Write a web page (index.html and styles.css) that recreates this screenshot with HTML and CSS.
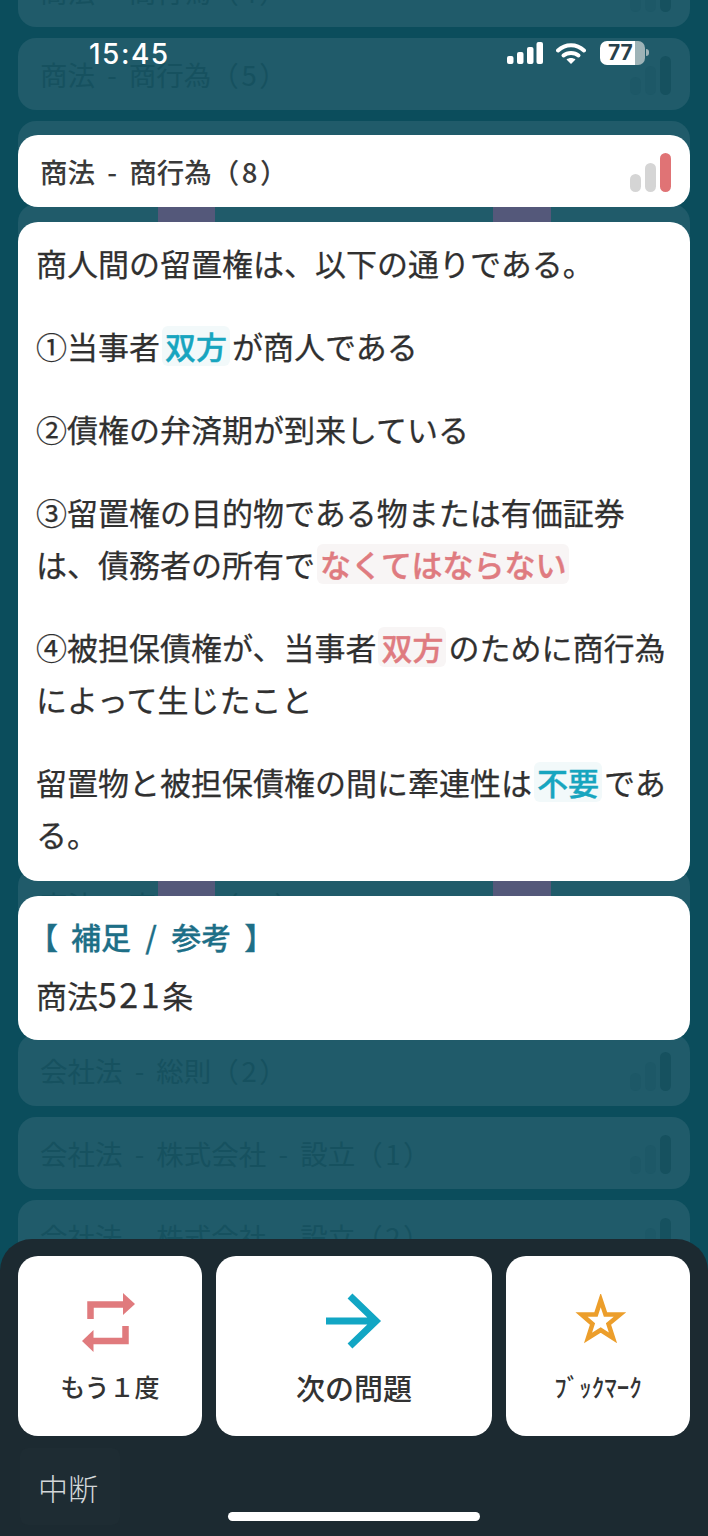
FILE: index.html
```html
<!DOCTYPE html>
<html lang="ja">
<head>
<meta charset="utf-8">
<title>商法 - 商行為（8）</title>
<link rel="stylesheet" href="styles.css">
</head>
<body>
<div class="screen">
  <div class="list">
    <div class="row"><span>商法 - 商行為（<span class="num">4</span>）</span><i class="bars"><b class="b1"></b><b class="b2"></b><b class="b3"></b></i></div>
    <div class="row"><span>商法 - 商行為（<span class="num">5</span>）</span><i class="bars"><b class="b1"></b><b class="b2"></b><b class="b3"></b></i></div>
    <div class="row"><span>商法 - 商行為（<span class="num">6</span>）</span><i class="bars"><b class="b1"></b><b class="b2"></b><b class="b3"></b></i></div>
    <div class="row"><span>商法 - 商行為（<span class="num">7</span>）</span><i class="bars"><b class="b1"></b><b class="b2"></b><b class="b3"></b></i></div>
    <div class="row"><span>商法 - 商行為（<span class="num">8</span>）</span></div>
    <div class="row"><span>商法 - 商行為（<span class="num">9</span>）</span></div>
    <div class="row"><span>商法 - 商行為（<span class="num">10</span>）</span></div>
    <div class="row"><span>商法 - 商行為（<span class="num">11</span>）</span></div>
    <div class="row"><span>商法 - 商行為（<span class="num">12</span>）</span></div>
    <div class="row"><span>商法 - 商行為（<span class="num">13</span>）</span></div>
    <div class="row"><span>商法 - 商行為（<span class="num">14</span>）</span></div>
    <div class="row"><span>商法 - 商行為（<span class="num">15</span>）</span></div>
    <div class="row"><span>会社法 - 総則（<span class="num">1</span>）</span></div>
    <div class="row"><span>会社法 - 総則（<span class="num">2</span>）</span><i class="bars"><b class="b1"></b><b class="b2"></b><b class="b3"></b></i></div>
    <div class="row"><span>会社法 - 株式会社 - 設立（<span class="num">1</span>）</span><i class="bars"><b class="b1"></b><b class="b2"></b><b class="b3"></b></i></div>
    <div class="row"><span>会社法 - 株式会社 - 設立（<span class="num">2</span>）</span><i class="bars"><b class="b1"></b><b class="b2"></b><b class="b3"></b></i></div>
  </div>

  <div class="strip strip-left"></div>
  <div class="strip strip-right"></div>

  <div class="modal">
    <div class="card title-card">
      <span>商法 - 商行為（<span class="num">8</span>）</span>
      <i class="bars bars-live"><b class="b1"></b><b class="b2"></b><b class="b3"></b></i>
    </div>
    <div class="card answer">
      <p>商人間の留置権は、以下の通りである。</p>
      <p>①当事者<em class="mark teal">双方</em>が商人である</p>
      <p>②債権の弁済期が到来している</p>
      <p>③留置権の目的物である物または有価証券は、債務者の所有で<em class="mark red">なくてはならない</em></p>
      <p>④被担保債権が、当事者<em class="mark red">双方</em>のために商行為によって生じたこと</p>
      <p>留置物と被担保債権の間に牽連性は<em class="mark teal">不要</em>である。</p>
    </div>
    <div class="card note">
      <h2 class="note-head"><span class="br-l">【</span>補足 / 参考<span class="br-r">】</span></h2>
      <p class="note-body">商法<span class="digits">521</span>条</p>
    </div>
  </div>

  <div class="status">
    <span class="time">15:45</span>
    <svg class="signal" viewBox="0 0 36 22" width="36" height="22" aria-hidden="true">
      <rect x="0" y="14" width="6.500" height="8" rx="2" fill="#fff"/>
      <rect x="10" y="10" width="6.500" height="12" rx="2" fill="#fff"/>
      <rect x="20" y="5" width="6.500" height="17" rx="2" fill="#fff"/>
      <rect x="29.500" y="0" width="6.500" height="22" rx="2" fill="#fff"/>
    </svg>
    <svg class="wifi" viewBox="0 0 30 22" width="30" height="22" aria-hidden="true">
      <path d="M2 8.500C9.500 1.500 20.500 1.500 28 8.500" fill="none" stroke="#fff" stroke-width="4" stroke-linecap="round"/>
      <path d="M7.500 13.500C11.500 10 18.500 10 22.500 13.500" fill="none" stroke="#fff" stroke-width="4" stroke-linecap="round"/>
      <path d="M15 22L10.500 17.500C13 15.500 17 15.500 19.500 17.500Z" fill="#fff"/>
    </svg>
    <span class="battery"><span class="battery-level">77</span></span>
    <span class="battery-nub"></span>
  </div>

  <div class="sheet">
    <div class="actions">
      <button class="action action-side">
        <svg class="ico-repeat" viewBox="0 0 54 60" width="54" height="60" aria-hidden="true">
          <path d="M8.500 27V12.500H42" fill="none" stroke="#e07a7d" stroke-width="6.500"/>
          <path d="M41 1L53 12L41 23Z" fill="#e07a7d"/>
          <path d="M43.500 34V49H11" fill="none" stroke="#e07a7d" stroke-width="6.500"/>
          <path d="M11.500 38L0 49L11.500 60Z" fill="#e07a7d"/>
        </svg>
        <span class="label">もう１度</span>
      </button>
      <button class="action action-main">
        <svg class="ico-next" viewBox="0 0 56 56" width="56" height="56" aria-hidden="true">
          <path d="M0 28H48M24 3L50 28L24 53" fill="none" stroke="#12a6c4" stroke-width="7"/>
        </svg>
        <span class="label label-main">次の問題</span>
      </button>
      <button class="action action-side">
        <svg class="ico-star" viewBox="0 0 54 50" width="54" height="50" aria-hidden="true">
          <path d="M26.700 6L31.500 20.500H46L34.500 30L39 44L26.700 36L14 44L18.500 30L7.500 20.500H22Z" fill="none" stroke="#ec9e2b" stroke-width="4.500" stroke-miterlimit="8"/>
        </svg>
        <span class="label">ﾌﾞｯｸﾏｰｸ</span>
      </button>
    </div>
    <div class="quit"><span>中断</span></div>
    <div class="home"></div>
  </div>
</div>
</body>
</html>
```

FILE: styles.css
```css
* { box-sizing: border-box; }
html, body { margin: 0; padding: 0; }
body {
  width: 708px;
  height: 1536px;
  overflow: hidden;
  font-family: "Noto Sans CJK JP", "Noto Sans", sans-serif;
  background: #0b4d5c;
}
.screen {
  position: relative;
  width: 708px;
  height: 1536px;
  overflow: hidden;
  background: #0b4d5c;
}

/* dimmed list behind the modal */
.list {
  display: flex;
  flex-direction: column;
  gap: 11px;
  margin-top: -45px;
  padding: 0 18px;
}
.row {
  flex: none;
  height: 72px;
  border-radius: 18px;
  background: #205b6a;
  color: #16515f;
  font-size: 27.500px;
  line-height: 72px;
  font-weight: 400;
  word-spacing: 6px;
  padding: 0 19px 0 22px;
  display: flex;
  justify-content: space-between;
  align-items: center;
}
.num { padding: 0 2.500px; }
.bars {
  display: flex;
  align-items: flex-end;
  gap: 4px;
  height: 39px;
  margin-top: 3px;
}
.bars b {
  display: block;
  width: 11px;
  border-radius: 6px;
  background: #1d5867;
}
.bars .b1 { height: 18px; }
.bars .b2 { height: 29px; }
.bars .b3 { height: 39px; background: #16515f; }

.strip {
  position: absolute;
  top: 200px;
  height: 700px;
  background: #54587a;
}
.strip-left { left: 158px; width: 57px; }
.strip-right { left: 493px; width: 58px; }

/* modal cards */
.modal {
  position: absolute;
  left: 0;
  right: 0;
  top: 135px;
  padding: 0 18px;
  display: flex;
  flex-direction: column;
  gap: 15px;
}
.card {
  background: #fff;
  border-radius: 20px;
  color: #303030;
}
.title-card {
  height: 72px;
  padding: 0 19px 0 22px;
  display: flex;
  justify-content: space-between;
  align-items: center;
  font-size: 27.500px;
  font-weight: 500;
  word-spacing: 6px;
  color: #3a3a3a;
}
.bars-live b { background: #d5d5d5; }
.bars-live .b3 { background: #e07375; }

.answer {
  padding: 15px 20px 21px 18px;
  font-size: 31px;
  line-height: 52px;
  -webkit-text-stroke: 0.25px currentColor;
}
.answer p { margin: 0 0 31px; }
.answer p:last-child { margin-bottom: 0; }
.mark {
  display: inline-block;
  font-style: normal;
  font-weight: 500;
  line-height: 40px;
  -webkit-text-stroke: 0.4px currentColor;
  border-radius: 6px;
  padding: 0 3px;
  margin: 0 2px;
}
.teal { color: #17a5bf; background: #f2f9fa; }
.red { color: #df7b80; background: #f8f5f5; }

.note {
  height: 144px;
  padding: 14px 18px 0;
}
.note-head {
  margin: 0 0 7px;
  font-size: 30px;
  line-height: 52px;
  font-weight: 500;
  color: #1e6f87;
  word-spacing: 7.500px;
  -webkit-text-stroke: 0.3px currentColor;
  display: flex;
  gap: 13px;
}
.br-l { margin-left: -8px; }
.note-body {
  margin: 0;
  font-size: 31px;
  line-height: 52px;
  -webkit-text-stroke: 0.25px currentColor;
}
.digits { font-size: 34px; letter-spacing: 2.500px; line-height: 1; }

/* status bar */
.status {
  position: absolute;
  left: 0;
  right: 0;
  top: 40px;
  height: 26px;
  color: #fff;
}
.time {
  position: absolute;
  left: 89px;
  top: -3px;
  font-family: Inter, Roboto, sans-serif;
  font-size: 28px;
  line-height: 34px;
  font-weight: 500;
  letter-spacing: 1.500px;
}
.signal { position: absolute; left: 507px; top: 2px; }
.wifi { position: absolute; left: 556px; top: 2px; }
.battery {
  position: absolute;
  left: 600px;
  top: 1px;
  width: 45px;
  height: 24px;
  border-radius: 7px;
  background: linear-gradient(90deg, #fff 0 35px, #9db3b7 35px);
  color: #27404a;
}
.battery-level {
  position: absolute;
  left: 8px;
  top: 0;
  font-family: Inter, Roboto, sans-serif;
  font-size: 21px;
  line-height: 24px;
  font-weight: 700;
}
.battery-nub {
  position: absolute;
  left: 646px;
  top: 9px;
  width: 3px;
  height: 7px;
  border-radius: 0 3px 3px 0;
  background: #9db3b7;
}

/* bottom sheet */
.sheet {
  position: absolute;
  left: 0;
  right: 0;
  bottom: 0;
  height: 297px;
  background: #1c2a31;
  border-radius: 32px 32px 0 0;
  padding: 17px 18px 0;
}
.actions {
  display: grid;
  grid-template-columns: 184px 276px 184px;
  gap: 14px;
  height: 180px;
}
.action {
  position: relative;
  border: 0;
  padding: 0;
  border-radius: 20px;
  background: #fff;
  color: #333;
  font-family: inherit;
  display: block;
}
.action svg { position: absolute; }
.label {
  position: absolute;
  left: 0;
  right: 0;
  top: 112px;
  text-align: center;
  font-size: 25px;
  line-height: 36px;
  font-weight: 500;
  white-space: nowrap;
}
.label-main {
  top: 113px;
  font-size: 29px;
}
.ico-repeat { left: 64px; top: 36px; }
.ico-next { left: 110px; top: 37px; }
.ico-star { left: 68px; top: 38px; }
.quit {
  margin-top: 12px;
  height: 77px;
  width: 100px;
  margin-left: 2px;
  padding-left: 18px;
  background: #1e2c33;
  border-radius: 8px;
  color: #d3d7d9;
  font-size: 30px;
  line-height: 78px;
  font-weight: 300;
}
.home {
  position: absolute;
  left: 228px;
  top: 273px;
  width: 252px;
  height: 9px;
  border-radius: 5px;
  background: #fff;
}
```
